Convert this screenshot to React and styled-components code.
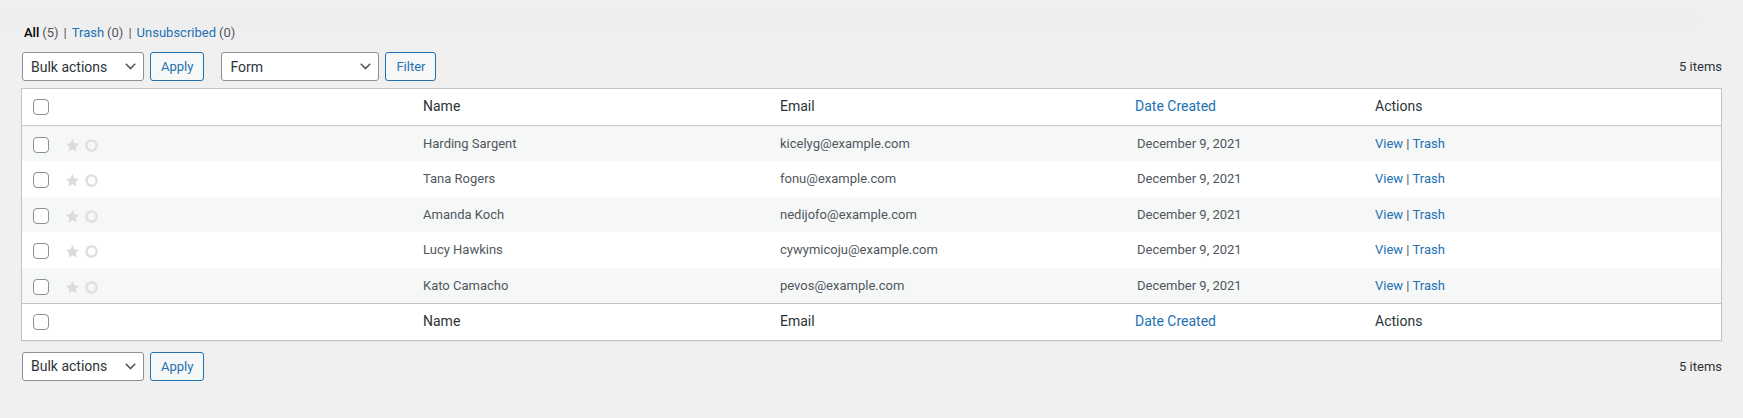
import React from "react";
import styled, { createGlobalStyle } from "styled-components";

const GlobalStyle = createGlobalStyle`
  html, body {
    margin: 0;
    padding: 0;
    background: #f0f0f1;
  }
  body {
    font-family: Roboto, "Liberation Sans", Arial, sans-serif;
    font-size: 13px;
    color: #3c434a;
  }
`;

const Page = styled.div`
  padding: 0 21px 20px;
`;

const TopShade = styled.div`
  height: 0;
  width: 1700px;
  margin-left: -21px;
  box-shadow: 0 0 14px 5px rgba(0, 0, 0, 0.025);
`;

const Views = styled.ul`
  list-style: none;
  margin: 20px 0 0;
  padding: 0 0 0 3px;
  display: flex;
  align-items: center;
  font-size: 13px;
  line-height: 26px;
  color: #50575e;
`;

const ViewItem = styled.li`
  display: flex;
  align-items: center;
`;

const ViewLink = styled.a`
  color: ${p => (p.current ? "#000" : "#2271b1")};
  font-weight: ${p => (p.current ? 500 : 400)};
  text-decoration: none;
  margin-right: 3px;
`;

const Sep = styled.span`
  margin: 0 5px;
  color: #50575e;
`;

const TableNav = styled.div`
  display: flex;
  align-items: center;
  height: 29px;
  margin: ${p => (p.bottom ? "11px 0 0" : "6px 0 7px")};
  padding-left: 1px;
`;

const Actions = styled.div`
  display: flex;
  align-items: center;
  margin-left: ${p => p.offset || 0}px;
  gap: 6px;
`;

const SelectBox = styled.div`
  box-sizing: border-box;
  width: ${p => p.width}px;
  height: 29px;
  display: flex;
  align-items: center;
  justify-content: space-between;
  padding: 0 7px 0 8px;
  border: 1px solid #8c8f94;
  border-radius: 3px;
  background: #fff;
  color: #2c3338;
  font-size: 14px;
`;

const Button = styled.button`
  box-sizing: border-box;
  height: 29px;
  padding: 0 10px;
  border: 1px solid #2271b1;
  border-radius: 3px;
  background: #f6f7f7;
  color: #2271b1;
  font-family: Roboto, "Liberation Sans", Arial, sans-serif;
  font-size: 13px;
  cursor: pointer;
`;

const Count = styled.span`
  margin-left: auto;
  font-size: 13px;
  color: #2c3338;
`;

const Table = styled.table`
  width: 100%;
  table-layout: fixed;
  border-collapse: separate;
  border-spacing: 0;
  background: #fff;
  border: 1px solid #c3c4c7;
  box-shadow: 0 1px 1px rgba(0, 0, 0, 0.04);
`;

const Th = styled.th`
  padding: ${p => (p.check ? "10px 0 0 11px" : p.sortable ? "8px 10px 8px 8px" : "8px 10px")};
  font-size: 14px;
  line-height: 1.4em;
  font-weight: 400;
  text-align: left;
  vertical-align: top;
  color: #2c3338;
  border-bottom: ${p => (p.foot ? "none" : "1px solid #c3c4c7")};
  border-top: ${p => (p.foot ? "1px solid #c3c4c7" : "none")};
`;

const SortLink = styled.a`
  color: #2271b1;
  text-decoration: none;
`;

const Row = styled.tr`
  background: ${p => (p.striped ? "#f6f7f7" : "#fff")};
`;

const Td = styled.td`
  padding: ${p => (p.check ? "11px 0 0 11px" : p.icons ? "13px 0 0 4px" : "8px 10px")};
  font-size: 13px;
  line-height: 1.5em;
  color: #50575e;
  vertical-align: top;
  white-space: nowrap;
`;

const Checkbox = styled.span`
  display: block;
  box-sizing: border-box;
  width: 16px;
  height: 16px;
  border: 1px solid #8c8f94;
  border-radius: 4px;
  background: #fff;
`;

const IconRow = styled.div`
  display: flex;
  align-items: center;
  gap: 6px;
`;

const RowLink = styled.a`
  color: #2271b1;
  text-decoration: none;
`;

const RowSep = styled.span`
  color: #50575e;
`;

const Chevron = () => (
  <svg width="11" height="7" viewBox="0 0 11 7">
    <polyline points="0.8,0.8 5.5,5.6 10.2,0.8" fill="none" stroke="#50575e" strokeWidth="1.6" />
  </svg>
);

const Star = () => (
  <svg width="13" height="13" viewBox="1 1 18 18">
    <path d="M10 1l2.8 5.9 6.2.8-4.5 4.3 1.1 6.3L10 15.3 4.4 18.3l1.1-6.3L1 7.7l6.2-.8z" fill="#dcdcde" />
  </svg>
);

const Ring = () => (
  <svg width="13" height="13" viewBox="0 0 13 13">
    <circle cx="6.5" cy="6.5" r="5.1" fill="none" stroke="#dedfe0" strokeWidth="2.4" />
  </svg>
);

const entries = [
  { name: "Harding Sargent", email: "kicelyg@example.com" },
  { name: "Tana Rogers", email: "fonu@example.com" },
  { name: "Amanda Koch", email: "nedijofo@example.com" },
  { name: "Lucy Hawkins", email: "cywymicoju@example.com" },
  { name: "Kato Camacho", email: "pevos@example.com" },
];

const HeadRow = ({ foot }) => (
  <tr>
    <Th check foot={foot}><Checkbox /></Th>
    <Th foot={foot}></Th>
    <Th foot={foot}>Name</Th>
    <Th foot={foot}>Email</Th>
    <Th foot={foot} sortable><SortLink href="#">Date Created</SortLink></Th>
    <Th foot={foot}>Actions</Th>
  </tr>
);

const App = () => {
  return (
    <Page>
      <GlobalStyle />
      <TopShade />
      <Views>
        <ViewItem><ViewLink current href="#">All</ViewLink>(5)<Sep>|</Sep></ViewItem>
        <ViewItem><ViewLink href="#">Trash</ViewLink>(0)<Sep>|</Sep></ViewItem>
        <ViewItem><ViewLink href="#">Unsubscribed</ViewLink>(0)</ViewItem>
      </Views>
      <TableNav>
        <Actions>
          <SelectBox width={122}><span>Bulk actions</span><Chevron /></SelectBox>
          <Button>Apply</Button>
        </Actions>
        <Actions offset={17}>
          <SelectBox width={158}><span>Form</span><Chevron /></SelectBox>
          <Button>Filter</Button>
        </Actions>
        <Count>5 items</Count>
      </TableNav>
      <Table>
        <colgroup>
          <col style={{ width: 40 }} />
          <col style={{ width: 351 }} />
          <col style={{ width: 357 }} />
          <col style={{ width: 357 }} />
          <col style={{ width: 238 }} />
          <col />
        </colgroup>
        <thead>
          <HeadRow />
        </thead>
        <tbody>
          {entries.map((e, i) => (
            <Row key={e.email} striped={i % 2 === 0}>
              <Td check><Checkbox /></Td>
              <Td icons>
                <IconRow><Star /><Ring /></IconRow>
              </Td>
              <Td>{e.name}</Td>
              <Td>{e.email}</Td>
              <Td>December 9, 2021</Td>
              <Td>
                <RowLink href="#">View</RowLink> <RowSep>|</RowSep> <RowLink href="#">Trash</RowLink>
              </Td>
            </Row>
          ))}
        </tbody>
        <tfoot>
          <HeadRow foot />
        </tfoot>
      </Table>
      <TableNav bottom>
        <Actions>
          <SelectBox width={122}><span>Bulk actions</span><Chevron /></SelectBox>
          <Button>Apply</Button>
        </Actions>
        <Count>5 items</Count>
      </TableNav>
    </Page>
  );
};

export default App;
